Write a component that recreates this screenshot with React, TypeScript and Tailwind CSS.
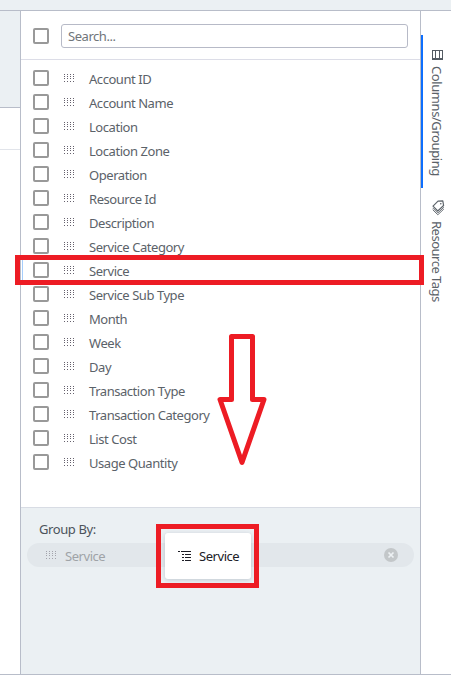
const COLUMNS = [
  'Account ID',
  'Account Name',
  'Location',
  'Location Zone',
  'Operation',
  'Resource Id',
  'Description',
  'Service Category',
  'Service',
  'Service Sub Type',
  'Month',
  'Week',
  'Day',
  'Transaction Type',
  'Transaction Category',
  'List Cost',
  'Usage Quantity',
];

function Checkbox() {
  return <span className="block h-4 w-4 shrink-0 rounded-[2px] border-2 border-[#999999] bg-white" />;
}

// Four columns of stacked dots used as a drag handle.
function DragHandle() {
  return (
    <svg width="12" height="9" viewBox="0 0 12 9" className="block shrink-0" shapeRendering="crispEdges" fill="#66616d">
      {[0, 3, 6, 9].map((x) =>
        [0, 2, 4, 7].map((y) => <rect key={`${x}-${y}`} x={x + 1} y={y} width="1" height="1" />),
      )}
    </svg>
  );
}

function ColumnRow({ label }: { label: string }) {
  const highlighted = label === 'Service';
  return (
    <li className="relative flex h-6 items-center pl-3">
      <Checkbox />
      <span className="ml-3.5 mt-px">
        <DragHandle />
      </span>
      <span className="ml-3.5 mt-0.5 whitespace-nowrap">{label}</span>
      {highlighted && (
        <>
          <span className="absolute inset-y-0 left-px right-0 border-x border-[#a5cdfb]" />
          <span className="absolute -left-1.5 -right-1 -top-[3px] h-[30px] border-[5px] border-[#ed1c24]" />
        </>
      )}
    </li>
  );
}

function ColumnsIcon() {
  return (
    <svg width="11" height="10" viewBox="0 0 11 10" className="block" fill="none" stroke="#545b63" shapeRendering="crispEdges">
      <path d="M.5 .5h10v9H.5zM3.5 .5v9M7.5 .5v9M.5 8.500h10" />
    </svg>
  );
}

function TagsIcon() {
  return (
    <svg width="13" height="16" viewBox="0 0 13 16" className="block" fill="none" stroke="#5d646b" strokeLinejoin="round" strokeLinecap="round">
      <path d="M6 1.2 10.800 .8 11.600 5.500 5.800 11 1 6.200z" strokeWidth="1.2" />
      <path d="M1 8.200 5.800 13 11.600 7.500M1 10 5.800 14.800 11.600 9.300" strokeWidth=".9" />
      <circle cx="8.800" cy="3.700" r=".8" fill="#545b63" stroke="none" />
    </svg>
  );
}

function ListTreeIcon() {
  return (
    <svg width="14" height="11" viewBox="0 0 14 11" className="block shrink-0" fill="#1c1c24" shapeRendering="crispEdges">
      <path d="M0 0h2v1H0zM3 0h10v1H3zM4 3h2v1H4zM7 3h6v1H7zM4 6h2v1H4zM7 6h6v1H7zM4 9h2v1H4zM7 9h6v1H7z" />
    </svg>
  );
}

function GroupBy() {
  return (
    <section className="flex-1 border-t border-[#d8dce4] bg-[#ebf0f3] px-1.5 pt-[11px]">
      <h2 className="ml-3 h-6 text-[13px] leading-5 tracking-[-0.4px] text-[#4c535b]">Group By:</h2>
      <div className="relative flex h-6 items-center rounded-full bg-[#e2e7eb] text-[#9fa3a7]">
        <span className="ml-[18px] opacity-50">
          <DragHandle />
        </span>
        <span className="ml-2 mt-px">Service</span>
        <svg width="14" height="14" viewBox="0 0 14 14" className="ml-auto mr-4 block">
          <circle cx="7" cy="7" r="7" fill="#c3c7c9" />
          <path d="M4.5 4.5l5 5M9.500 4.500l-5 5" stroke="#edf1f3" strokeWidth="1.7" />
        </svg>
        <div className="absolute -top-[19px] left-[129px] flex h-16 w-[103px] border-[5px] border-[#ed1c24] p-[3px]">
          <div className="ml-px mt-px flex h-[46px] w-[86px] items-center rounded-[3px] bg-white pl-[13px] text-[#202027] shadow-[0_1px_4px_rgba(40,60,90,0.22)]">
            <ListTreeIcon />
            <span className="-mt-px ml-[7px]">Service</span>
          </div>
        </div>
      </div>
    </section>
  );
}

export default function App() {
  return (
    <div className="h-[678px] w-[461px] overflow-hidden bg-white font-['Noto_Sans','Open_Sans',sans-serif] text-[13px] leading-5 tracking-[-0.45px] text-[#5b6269]">
      <div className="flex h-[675px] w-[451px] flex-col border-b border-[#b8bdc9]">
        <header className="h-[11px] shrink-0 border-b border-[#b8bdc9] bg-[#ebf0f3]" />
        <div className="flex min-h-0 flex-1">
          <div className="w-5 shrink-0">
            <div className="h-[97px] border-b border-[#b8bdc9] bg-[#ebf0f3]" />
            <div className="h-[42px] border-b border-[#e1e4ea]" />
          </div>
          <main className="flex w-[401px] shrink-0 flex-col border-x border-[#b8bdc9]">
            <div className="flex h-[49px] shrink-0 items-center border-b border-[#dcdde7] pl-3 pt-0.5">
              <Checkbox />
              <div className="ml-3 flex h-6 w-[347px] items-center rounded-[3px] border border-[#b7bac7] pl-1.5 text-[#70757a]">
                Search...
              </div>
            </div>
            <ul className="h-[447px] shrink-0 pt-1.5">
              {COLUMNS.map((label) => (
                <ColumnRow key={label} label={label} />
              ))}
            </ul>
            <GroupBy />
          </main>
          <aside className="flex w-[30px] flex-col">
            <div className="mt-6 flex h-[153px] w-[30px] flex-col pl-2 pt-[15px] shadow-[inset_2px_0_#0d6efd]">
              <div className="ml-[3px]">
                <ColumnsIcon />
              </div>
              <span className="-ml-0.5 mt-1.5 w-5 whitespace-nowrap tracking-[-0.42px] [writing-mode:vertical-rl]">Columns/Grouping</span>
            </div>
            <div className="flex flex-col pl-2 pt-3">
              <div className="ml-[3px]">
                <TagsIcon />
              </div>
              <span className="-ml-0.5 mt-[5px] w-5 whitespace-nowrap tracking-[-0.5px] [writing-mode:vertical-rl]">Resource Tags</span>
            </div>
          </aside>
        </div>
      </div>
      <svg className="pointer-events-none absolute left-[215px] top-[330px]" width="54" height="140" viewBox="0 0 54 140" fill="none" stroke="#ed1c24" strokeWidth="5" strokeLinejoin="round">
        <path d="M16.500 6.500h21v63h11.500L27 132.500 5 69.500h11.500z" />
      </svg>
    </div>
  );
}
